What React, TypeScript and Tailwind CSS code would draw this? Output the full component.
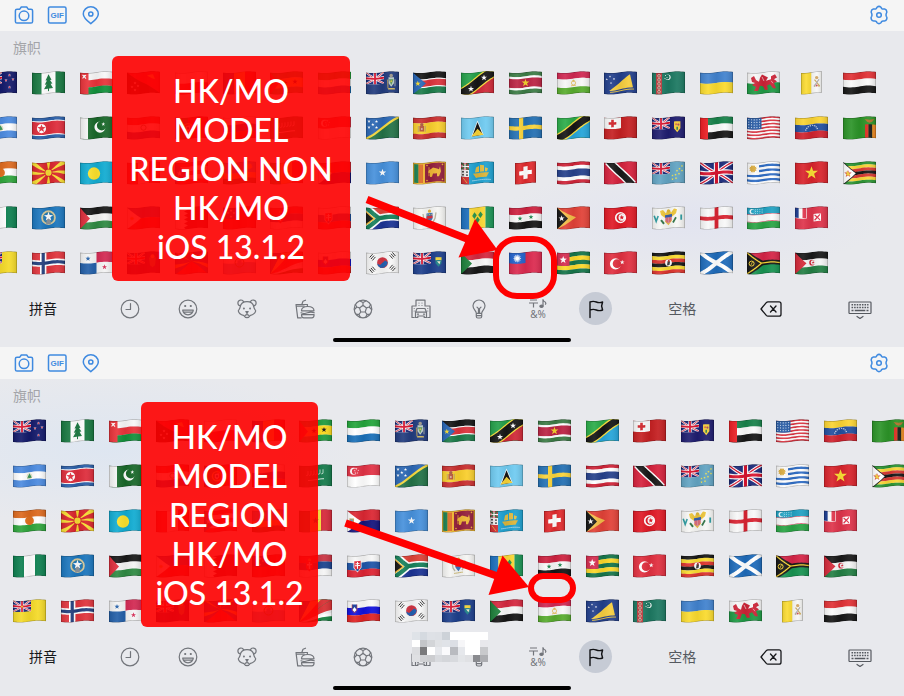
import type { ReactNode } from "react";

/* ---------- flag drawing helpers: every shape is bent along one wave ---------- */

type Shape = { d: string; f?: string; s?: string; w?: number };
type Pt = [number, number];

const W = 33;
const H = 21.5;
const wave = (x: number) => 1.5 + 0.75 * Math.sin((2 * Math.PI * x) / W) - (0.7 * x) / W;

const trace = (pts: Pt[], closed: boolean) => {
  const out: string[] = [];
  const n = closed ? pts.length : pts.length - 1;
  for (let i = 0; i < n; i++) {
    const [x0, y0] = pts[i];
    const [x1, y1] = pts[(i + 1) % pts.length];
    const steps = Math.max(1, Math.ceil(Math.abs(x1 - x0) / 2));
    for (let k = i === 0 ? 0 : 1; k <= steps; k++) {
      const x = x0 + ((x1 - x0) * k) / steps;
      const y = y0 + ((y1 - y0) * k) / steps;
      out.push(`${x.toFixed(2)} ${(y + wave(x)).toFixed(2)}`);
    }
  }
  return "M" + out.join("L") + (closed ? "Z" : "");
};
const toPts = (text: string): Pt[] => text.split(" ").map((p) => p.split(",").map(Number) as Pt);

const P = (pts: string, f: string): Shape => ({ d: trace(toPts(pts), true), f });
const L = (pts: string, s: string, w: number): Shape => ({ d: trace(toPts(pts), false), s, w });
const R = (x: number, y: number, w: number, h: number, f: string): Shape => ({
  d: trace([[x, y], [x + w, y], [x + w, y + h], [x, y + h]], true),
  f,
});
const ring = (cx: number, cy: number, r: number) => {
  const y = cy + wave(cx);
  return `M${cx - r} ${y}a${r} ${r} 0 1 0 ${2 * r} 0a${r} ${r} 0 1 0 ${-2 * r} 0Z`;
};
const C = (cx: number, cy: number, r: number, f: string): Shape => ({ d: ring(cx, cy, r), f });
const O = (cx: number, cy: number, r: number, s: string, w: number): Shape => ({ d: ring(cx, cy, r), s, w });
const S = (cx: number, cy: number, r: number, f: string, n = 5, inner = 0.4): Shape => {
  const oy = wave(cx) + cy;
  const pts: string[] = [];
  for (let i = 0; i < n * 2; i++) {
    const a = -Math.PI / 2 + (i * Math.PI) / n;
    const q = i % 2 ? r * inner : r;
    pts.push(`${(cx + q * Math.cos(a)).toFixed(2)} ${(oy + q * Math.sin(a)).toFixed(2)}`);
  }
  return { d: "M" + pts.join("L") + "Z", f };
};
const bands = (...list: [string, number][]): Shape[] => {
  const total = list.reduce((a, b) => a + b[1], 0);
  let y = 0;
  return list.map(([c, n]) => {
    const h = (n / total) * H;
    const s = R(0, y, W, h + 0.1, c);
    y += h;
    return s;
  });
};
const hor = (...cs: string[]) => bands(...cs.map((c) => [c, 1] as [string, number]));
const ver = (...cs: string[]) => cs.map((c, i) => R((i * W) / cs.length, 0, W / cs.length + 0.1, H, c));
const bg = (c: string) => R(0, 0, W, H, c);
const union = (w: number, h: number, k = 1): Shape[] => [
  R(0, 0, w, h, "#1b2a7a"),
  L(`0,0 ${w},${h}`, "#fff", 2.4 * k),
  L(`0,${h} ${w},0`, "#fff", 2.4 * k),
  L(`0,0 ${w},${h}`, "#d8142f", 0.9 * k),
  L(`0,${h} ${w},0`, "#d8142f", 0.9 * k),
  R(w / 2 - 1.9 * k, 0, 3.8 * k, h, "#fff"),
  R(0, h / 2 - 1.9 * k, w, 3.8 * k, "#fff"),
  R(w / 2 - 1.1 * k, 0, 2.2 * k, h, "#d8142f"),
  R(0, h / 2 - 1.1 * k, w, 2.2 * k, "#d8142f"),
];
const ensign = (field: string): Shape[] => [...union(18, 11.5, 0.85), R(18, 0, 15, H, field), R(0, 11.5, 18.1, 10, field)];
const crescent = (cx: number, cy: number, r: number, f: string, back: string, shift = 0.3): Shape[] => [
  C(cx, cy, r, f),
  C(cx + r * shift, cy, r * 0.8, back),
];

const flags: Record<string, Shape[]> = {
  NZ: [...ensign("#141a6b"), ...[[25.5, 4], [22, 9], [29, 8], [25.5, 16]].flatMap(([x, y]) => [S(x, y, 1.7, "#fff"), S(x, y, 1.1, "#d8142f")])],
  NI: [...hor("#4c8be0", "#fff", "#4c8be0"), P("16.5,8 14,13 19,13", "#3f9a5f"), O(16.5, 11, 2.4, "#c9c483", 0.5)],
  NE: [...hor("#dd6a1f", "#fff", "#2fa53c"), C(16.5, 10.5, 4.4, "#e0701f")],
  NG: ver("#0e8050", "#fff", "#0e8050"),
  NU: [bg("#f5db2a"), ...union(18, 11, 0.8), S(9, 5.5, 1.6, "#f5db2a")],
  NF: [bg("#fff"), R(0, 0, 9.5, H, "#177740"), R(23.5, 0, 10, H, "#177740"), P("16.5,2 13.5,8 15,8 12.8,12 14.6,12 12,16.5 21,16.5 18.6,12 20.4,12 18,8 19.5,8", "#217c46"), R(16, 16, 1, 3, "#217c46")],
  KP: [...bands(["#2b5fa8", 3], ["#fff", 0.8], ["#de2d3c", 11], ["#fff", 0.8], ["#2b5fa8", 3]), C(9.5, 10.5, 4.6, "#fff"), S(9.5, 10.5, 4.4, "#de2d3c")],
  MK: [bg("#d9252c"), P("0,0 4,0 16.5,10.5 0,2.5", "#f7dc32"), P("33,0 29,0 16.5,10.5 33,2.5", "#f7dc32"), P("0,21.5 4,21.5 16.5,10.5 0,19", "#f7dc32"), P("33,21.5 29,21.5 16.5,10.5 33,19", "#f7dc32"), P("14.8,0 18.2,0 16.5,10", "#f7dc32"), P("14.8,21.5 18.2,21.5 16.5,11", "#f7dc32"), P("0,8.7 16,10.5 0,12.3", "#f7dc32"), P("33,8.7 17,10.5 33,12.3", "#f7dc32"), C(16.5, 10.5, 4, "#d9252c"), C(16.5, 10.5, 3.1, "#f7dc32")],
  MP: [bg("#1b76bd"), O(16.5, 10.5, 6.4, "#d5c79b", 1.8), O(16.5, 10.5, 5.2, "#4e8b85", 0.6), P("14.8,11 18.2,11 19,17 14,17", "#8d949c"), S(16.5, 9.5, 4.8, "#fff")],
  NO: [bg("#e0353d"), R(8, 0, 6.4, H, "#fff"), R(0, 7.3, W, 6.4, "#fff"), R(9.6, 0, 3.2, H, "#233f7d"), R(0, 8.9, W, 3.2, "#233f7d")],
  OM: [...hor("#f7f7f7", "#e9333a", "#12913c"), R(0, 0, 8.5, H, "#e9333a"), L("2.5,2 6,5.5", "#fff", 1.1), L("6,2 2.5,5.5", "#fff", 1.1), C(4.2, 3, 0.9, "#fff")],
  PK: [bg("#19682a"), R(0, 0, 8, H, "#f5f5f5"), C(20, 10.5, 5.6, "#fff"), C(21.8, 9.2, 4.9, "#19682a"), S(23.3, 7.8, 2, "#fff")],
  PW: [bg("#12acd2"), C(14, 11, 6.2, "#fbe12c")],
  PS: [...hor("#191919", "#f4f4f4", "#2f8a43"), P("0,0 10,10.5 0,21.5", "#df2e3c")],
  PA: [bg("#f4f4f4"), R(16.5, 0, 16.5, 10.5, "#d32a53"), R(0, 10.5, 16.5, 11, "#235fa8"), S(8, 5.5, 2.7, "#235fa8"), S(24.5, 15.8, 2.7, "#d32a53")],
  PG: [bg("#111"), P("0,0 33,0 33,21.5", "#d01f36"), ...[[8, 10], [8, 17], [5, 14], [11, 13]].map(([x, y]) => S(x, y, 1.5, "#fff")), P("20,4 26,3 28,8 25,7", "#f4cf2c")],
  PY: [...hor("#d3222f", "#fff", "#0c3ba0"), O(16.5, 10.5, 2.6, "#387c4c", 0.8)],
  PE: ver("#d3222f", "#fff", "#d3222f"),
  PH: [...hor("#1144a5", "#ce1d2e"), P("0,0 14,10.5 0,21.5", "#fff"), S(5, 10.5, 2.6, "#f3c62a", 8)],
  PN: [...ensign("#141a6b"), P("22,6 29,6 28,14 25.5,16 23,14", "#48885c"), C(25.5, 5, 2, "#e2c84a")],
  PL: hor("#fff", "#d8203c"),
  PT: [bg("#d8202a"), R(0, 0, 13, H, "#176b35"), O(13, 10.5, 4.6, "#f1dc32", 1.4), P("10.8,8 15.2,8 15.2,12 13,14 10.8,12", "#fff"), C(13, 10.5, 1.2, "#1b45a0")],
  PR: [...hor("#de2d3c", "#fff", "#de2d3c", "#fff", "#de2d3c"), P("0,0 13,10.5 0,21.5", "#175fb5"), S(4.6, 10.5, 3, "#fff")],
  QA: [bg("#7e1c3d"), P("0,0 9,0 13,1.5 9,3.5 13,5.5 9,7.5 13,9.5 9,11.5 13,13.5 9,15.5 13,17.5 9,19.5 11,21.5 0,21.5", "#fff")],
  RE: [bg("#1b3f96"), P("16.5,9 1,21.5 32,21.5", "#dc2430"), P("16.5,9 0,0 4,0", "#f4cb27"), P("16.5,9 15,0 18,0", "#f4cb27"), P("16.5,9 33,0 29,0", "#f4cb27"), P("16.5,9 0,12 0,16", "#f4cb27"), P("16.5,9 33,12 33,16", "#f4cb27")],
  RO: ver("#12388f", "#f7d22b", "#ce1c2b"),
  RU: hor("#fff", "#1540a5", "#d6222c"),
  RW: [...bands(["#2aa4dd", 2], ["#f8dd34", 1], ["#27703b", 1]), S(26.5, 5, 3.4, "#f8dd34", 12, 0.6)],
  WS: [bg("#d0212e"), R(0, 0, 16, 11, "#12318e"), ...[[8, 2.5], [5, 5], [11, 5], [8, 8.5]].map(([x, y]) => S(x, y, 1.5, "#fff"))],
  SM: [...hor("#fff", "#62b4e6"), O(16.5, 10.5, 4.4, "#4b8a4b", 1), P("14.5,8 18.5,8 18.5,12 16.5,14 14.5,12", "#66a8d8"), C(16.5, 6, 1.5, "#e4b92b")],
  ST: [...bands(["#1f9a3f", 2], ["#fbd81c", 3], ["#1f9a3f", 2]), P("0,0 9,10.5 0,21.5", "#d6222c"), S(15, 10.5, 2.8, "#111"), S(25, 10.5, 2.8, "#111")],
  SA: [bg("#157a4b"), ...[9, 12, 15, 18, 21, 24].map((x) => L(`${x},5 ${x},9 ${x - 1.8},9.6`, "#d6eadf", 0.8)), L("9,14.5 25,14.5", "#d6eadf", 1)],
  SN: [...ver("#168a45", "#f6de3d", "#d6293a"), S(16.5, 10.5, 3.4, "#168a45")],
  RS: [...hor("#c93443", "#1b438e", "#f5f5f5"), P("7,5 14,5 14,12 10.5,15.5 7,12", "#d1333d"), R(9.8, 6, 1.4, 7, "#fff"), R(8, 8, 5, 1.4, "#fff"), C(10.5, 3.8, 1.5, "#e7c04a")],
  SC: [bg("#16803f"), P("0,21.5 33,12 33,16.5", "#fff"), P("0,21.5 33,6 33,13", "#f2f2f2"), P("0,21.5 33,0 33,10", "#d92f33"), P("0,21.5 20,0 33,0", "#d92f33"), P("0,21.5 11,0 22,0", "#fada45"), P("0,21.5 0,0 11,0", "#134a94")],
  SL: hor("#24a53b", "#fff", "#1a70b8"),
  SG: [...hor("#e23346", "#fff"), ...crescent(6.5, 5.3, 3.5, "#fff", "#e23346", 0.35), ...[[9.5, 2.8], [7.8, 4.6], [11.3, 4.6], [8.4, 7], [10.6, 7]].map(([x, y]) => S(x, y, 0.9, "#fff"))],
  SX: [...hor("#dc2733", "#14147d"), P("0,0 14,10.5 0,21.5", "#fff"), P("2.5,7.5 7,7.5 7,11.5 4.7,14 2.5,11.5", "#c3a456"), R(3.6, 8.6, 2.2, 2.5, "#5a97cf")],
  SK: [...hor("#f6f6f6", "#1f55a8", "#de2433"), P("6.5,4.5 14.5,4.5 14.5,12 10.5,16.5 6.5,12", "#fff"), P("7.3,5.2 13.7,5.2 13.7,12 10.5,15.4 7.3,12", "#e12433"), R(10, 6, 1, 7.5, "#fff"), R(8.6, 7.2, 3.8, 1, "#fff"), R(8, 9.2, 5, 1, "#fff"), C(10.5, 14, 1.2, "#1f55a8")],
  SI: [...hor("#fafafa", "#1212dc", "#e02323"), P("5,3.5 10,3.5 10,9 7.5,12 5,9", "#123b9b"), P("5.3,9 7.5,6 9.7,9 7.5,11", "#fff"), L("5,3.5 5,9 7.5,12 10,9 10,3.5", "#d8353b", 0.6)],
  GS: [...ensign("#223c7e"), P("22.5,6 28,6 28,12 25.2,15.5 22.5,12", "#b9c9c4"), P("23,8 27.5,8 25.2,14", "#4d8f55"), C(25.2, 4.4, 1.8, "#9a9488"), L("21.5,8 22,17", "#9c8a63", 1.2), L("29,8 29,15", "#87909b", 1.2), L("22,17.5 29,17.5", "#cfb65d", 1.4), S(25.2, 10, 1.5, "#e9c83b")],
  SB: [bg("#2b67b4"), P("0,21.5 33,0 33,21.5", "#237247"), L("-1,22 34,-0.5", "#f5d83c", 2.2), ...[[3, 3.5], [10.5, 3.5], [6.8, 6.5], [3, 9.5], [10.5, 9.5]].map(([x, y]) => S(x, y, 1.7, "#fff"))],
  SO: [bg("#4791dc"), S(16.5, 10.5, 3.9, "#fff")],
  ZA: [...hor("#dd4136", "#1b3394"), L("-1,-1.5 13,10.5 34,10.5", "#fff", 7.6), L("-1,22.5 13,10.5", "#fff", 7.6), L("-1,-1 13,10.5 34,10.5", "#16805a", 4.4), L("-1,22 13,10.5", "#16805a", 4.4), P("0,3.2 9.4,10.6 0,18", "#f2bd3a"), P("0,5 7.2,10.6 0,16.2", "#181818")],
  KR: [
    bg("#f7f7f7"),
    C(16.5, 10.5, 5.4, "#d13442"),
    P("11.2,10.5 14,12.5 16.5,10.6 19,8.8 21.8,10.8 20.8,13.8 18.2,15.5 14.6,15.5 12,13.2", "#2260b0"),
    ...[[5, 6, 8, 2.5], [25, 2.5, 28, 6], [5, 15, 8, 18.5], [25, 18.5, 28, 15]].flatMap(([ax, ay, bx, by]) =>
      [-1.4, 0, 1.4].map((k) => {
        const s = by > ay ? 1 : -1;
        return L(`${ax + k},${ay - k * s} ${bx + k},${by - k * s}`, "#1b1b1b", 0.95);
      }),
    ),
  ],
  SS: [...bands(["#161616", 6], ["#fff", 1], ["#dc343d", 6], ["#fff", 1], ["#1b7c4a", 6]), P("0,0 13,10.5 0,21.5", "#2765b5"), S(4.8, 10.7, 2.9, "#f8dc2f")],
  ES: [...bands(["#c93030", 1], ["#f9cf2d", 2], ["#c93030", 1]), R(6.5, 8, 4.6, 5.5, "#b5533a"), R(4.8, 8, 0.9, 6, "#b9a06b"), R(11.8, 8, 0.9, 6, "#b9a06b"), C(8.8, 6.6, 1.7, "#a8533e"), C(8.8, 11, 1, "#d9b0a3")],
  LK: [bg("#f1b932"), R(1.2, 1.4, 4.4, 18.6, "#1a8052"), R(5.6, 1.4, 4.4, 18.6, "#dc6a25"), R(12, 1.4, 19.6, 18.6, "#931f3c"), P("16,8 20,6 26,8 27,5 28,10 26,15 24,15 24,12 20,12 19,15 17,15 17,11 15,10", "#eeb634"), L("16,5 16,14", "#eeb634", 0.8), ...[[14, 3], [29.5, 3], [14, 18], [29.5, 18]].map(([x, y]) => C(x, y, 0.8, "#eeb634"))],
  BL: [bg("#f5f5f3"), P("13.5,6 19.5,6 19.5,12 16.5,16 13.5,12", "#3d74bd"), R(13.5, 8.8, 6, 2.6, "#d8313a"), ...[14.8, 16.5, 18.2].map((x) => C(x, 7.4, 0.6, "#ecc93f")), C(16.5, 4, 1.6, "#dfb341"), L("10,6 11,12 13,15.5", "#b9b39d", 1.3), L("23,6 22,12 20,15.5", "#b9b39d", 1.3), L("12,17.6 21,17.6", "#c9b36a", 0.9)],
  SH: [...ensign("#1d3f8c"), P("22.5,6 28.5,6 28.5,12 25.5,15.5 22.5,12", "#1d7f86"), R(22.5, 6, 6, 2.8, "#f3cf39"), P("24,10 27.5,10 26.5,13", "#e9e6c8")],
  KN: [bg("#24a04a"), P("33,0 33,21.5 0,21.5", "#d02938"), L("-1,22.3 34,-1", "#f8df3b", 11), L("-1,22.3 34,-1", "#161616", 8.6), S(10, 16, 3.2, "#fff"), S(23, 6.4, 3.2, "#fff")],
  LC: [bg("#70cbf1"), P("16.5,3.4 22.6,18.5 10.4,18.5", "#fff"), P("16.5,5.2 21.8,18.5 11.2,18.5", "#171717"), P("16.5,11.5 22.6,18.5 10.4,18.5", "#f7d337")],
  PM: [bg("#1fa1d0"), R(0, 0, 8, 7, "#bd3540"), L("0,0 8,7", "#2c7a45", 1.3), L("8,0 0,7", "#2c7a45", 1.3), L("4,0 4,7", "#fff", 1.1), L("0,3.5 8,3.5", "#fff", 1.1), R(0, 7, 8, 7, "#f2eeee"), ...[[2, 9], [6, 9], [2, 12], [6, 12]].map(([x, y]) => C(x, y, 0.9, "#222")), R(0, 14, 8, 7.5, "#d22d33"), L("2,15 6,20", "#e8c344", 0.8), P("12,11 28,11 25.5,15.5 15,15.5", "#dcb53a"), P("15,5 18,4 18,10 14,10", "#e3bd42"), P("19,3 23,4 23,10 19,10", "#e3bd42"), P("24,6 27,7 26,10 24,10", "#e3bd42"), L("11,18 30,18", "#9bd3ea", 0.9)],
  VC: [R(0, 0, 8.5, H, "#1c6fbd"), R(8.4, 0, 16.2, H, "#fbd937"), R(24.5, 0, 8.6, H, "#1c9556"), ...[[13.5, 8], [19.5, 8], [16.5, 13]].map(([x, y]) => P(`${x},${y - 3.3} ${x + 2.3},${y} ${x},${y + 3.3} ${x - 2.3},${y}`, "#28944e"))],
  SD: [...hor("#d5283f", "#f7f7f7", "#161616"), P("0,0 11,10.5 0,21.5", "#1d7f3a")],
  SR: [...bands(["#3c7c46", 3.2], ["#fff", 1.6], ["#bb2343", 7], ["#fff", 1.6], ["#3c7c46", 3.2]), S(16.5, 10.7, 4.1, "#f5d22e")],
  SE: [bg("#2470b3"), R(10, 0, 4.2, H, "#fad43b"), R(0, 8.4, W, 4.2, "#fad43b")],
  CH: [bg("#e02a2d"), R(14.4, 4.2, 4.2, 12.6, "#fff"), R(10.2, 8.4, 12.6, 4.2, "#fff")],
  SY: [...hor("#ce2240", "#f8f8f8", "#161616"), S(11, 10.7, 2.5, "#198249"), S(22, 10.7, 2.5, "#198249")],
  TW: [bg("#dc2b50"), R(0, 0, 16.5, 10.8, "#2564cd"), S(8.2, 5.4, 4.1, "#fff", 12, 0.65), O(8.2, 5.4, 2.4, "#6a97de", 0.5)],
  TJ: [...bands(["#d02852", 2], ["#f7f7f7", 2.6], ["#58ac2e", 2]), O(16.5, 10.8, 2.1, "#e6bf55", 0.8), S(16.5, 8.6, 1.6, "#e6bf55"), R(14, 13, 5, 0.7, "#e6bf55")],
  TZ: [bg("#2bac49"), P("33,0 33,21.5 0,21.5", "#25a5d9"), L("-1,22.3 34,-1", "#f8dc3c", 9.4), L("-1,22.3 34,-1", "#151515", 6.8)],
  TH: bands(["#cf2438", 1], ["#fff", 1], ["#26418b", 2], ["#fff", 1], ["#cf2438", 1]),
  TL: [bg("#e24238"), P("0,0 19,10.5 0,21.5", "#f3bd48"), P("0,0 11,10.5 0,21.5", "#171717"), S(4.6, 10.5, 3.2, "#fff")],
  TG: [...hor("#15754a", "#fcd829", "#15754a", "#fcd829", "#15754a"), R(0, 0, 12.5, 12.9, "#d62d50"), S(6.2, 6.8, 3.9, "#fff")],
  TK: [bg("#223f8c"), P("5,18 26,3 29,16", "#f6ce3f"), L("6,19.3 30,17.6", "#f6ce3f", 0.9), ...[[6, 3.5], [2.8, 6.5], [10, 6], [7, 10]].map(([x, y]) => S(x, y, 1.2, "#fff"))],
  TO: [bg("#c52022"), R(0, 0, 17, 11, "#f9f9f9"), R(7.2, 1.7, 2.6, 7.6, "#ce2127"), R(4.7, 4.2, 7.6, 2.6, "#ce2127")],
  TT: [bg("#d5213c"), L("4.5,-2 28.5,23.5", "#fff", 9), L("4.5,-2 28.5,23.5", "#171717", 6.2)],
  TN: [bg("#e01a26"), C(16.5, 10.5, 5.6, "#fff"), C(16.8, 10.5, 4.2, "#e01a26"), C(17.9, 10.5, 3.4, "#fff"), S(17.8, 10.5, 2.6, "#e01a26")],
  TR: [bg("#e13040"), C(11.5, 11, 5.6, "#fff"), C(13.1, 11, 4.4, "#e13040"), S(18.2, 10.4, 2.5, "#fff")],
  TM: [bg("#1d7962"), R(4, 0, 6, H, "#b83a3c"), ...[2.8, 6.8, 10.8, 14.8, 18.7].flatMap((y) => [O(7, y, 1.3, "#efd9c6", 0.7), C(7, y, 0.6, "#2b7252")]), C(15.8, 5, 2.8, "#fff"), C(15, 4.6, 2.5, "#1d7962"), ...[[13.5, 3], [15, 5], [13, 5.8]].map(([x, y]) => C(x, y, 0.5, "#fff"))],
  TC: [...ensign("#1f1d70"), P("22,5 28.4,5 28.4,12 25.2,16 22,12", "#f3cc3b"), C(24.2, 8, 1.1, "#d96d3f"), C(26.4, 8.3, 1.1, "#a8475a"), R(24.4, 10.5, 1.6, 3, "#33804c")],
  TV: [...ensign("#62a4c3"), ...[[30, 4.5], [27.5, 7.5], [30, 9], [25, 9.5], [27, 12.5], [23.5, 13.5], [20.5, 14], [24, 17], [20.5, 17.6]].map(([x, y]) => S(x, y, 1.3, "#f6e34a"))],
  VI: [bg("#f7f7f5"), P("8,3 11,2 14,6 15,3 18,3 19,6 22,2 25,3 24,7 20,10 20,14 16.5,18 13,14 13,10 9,7", "#edc53a"), L("9,12 12,16", "#2f7245", 2), L("24,11 21,16", "#2f7245", 1.8), P("13,8 20,8 20,13 16.5,16.5 13,13", "#e08f9b"), L("15,10 15,15", "#d23a4d", 0.8), L("18,10 18,15", "#d23a4d", 0.8), R(13, 7.5, 7, 2.6, "#355fae"), C(16.5, 3.8, 1.6, "#e0b838"), L("2.2,8 4.2,13.4 6.2,8", "#2a9ba0", 1.6), L("29.2,8 29.2,13.4", "#2a9ba0", 1.8)],
  UG: [...hor("#171717", "#fbdc31", "#dc342d", "#171717", "#fbdc31", "#dc342d"), C(16.5, 10.7, 3.4, "#fff"), P("15,13 15.6,9 17,8 18,10 17.5,13", "#444"), C(16.8, 8.8, 0.9, "#c33a31")],
  UA: hor("#4283cf", "#fadb2f"),
  AE: [...hor("#18824a", "#fafafa", "#181818"), R(0, 0, 8, H, "#ec1f24")],
  GB: union(33, 21.5, 1.4),
  EN: [bg("#f8f8f8"), R(14.6, 0, 3.8, H, "#d92432"), R(0, 8.8, W, 3.8, "#d92432")],
  SCT: [bg("#1e6bba"), L("-1,-1 34,22.5", "#fff", 4), L("-1,22.5 34,-1", "#fff", 4)],
  WLS: [...hor("#f8f8f8", "#1f9a45"), P("4,5 7,3 9,7 12,9 13,5 15,2 21,6 19,9 24,8 24,5 28,3 30,6 27,8 30,10 27,12 29,17 26,17 23,13 20,14 21,18 18,18 16,14 13,13 11,18 7,18 9,14 5,12 8,10 5,9", "#cc2336"), L("15,4.5 17,9", "#f3dfe0", 0.7), L("24,9.5 26,12", "#f3dfe0", 0.6)],
  US: [...hor(...Array.from({ length: 13 }, (_, i) => (i % 2 ? "#fff" : "#dc3542"))), R(0, 0, 14.5, 11.6, "#2a5da6"), ...[1.8, 4.4, 7, 9.6].flatMap((y) => [1.8, 4.5, 7.2, 9.9, 12.6].map((x) => C(x, y, 0.6, "#d4e2f4")))],
  UY: [...hor("#fff", "#2f6dc5", "#fff", "#2f6dc5", "#fff", "#2f6dc5", "#fff", "#2f6dc5", "#fff"), R(0, 0, 12, 11.9, "#fafafa"), S(6, 5.8, 4.2, "#d9aa3c", 12, 0.65)],
  UZ: [...bands(["#22a2c3", 6], ["#d4314b", 0.5], ["#fafafa", 6], ["#d4314b", 0.5], ["#2aa545", 6]), ...crescent(5, 3.5, 2.5, "#fff", "#22a2c3", 0.4), ...[8.5, 10.7, 12.9, 15.1].flatMap((x) => [1.8, 3.6, 5.4].map((y) => C(x, y, 0.45, "#fff")))],
  VU: [...hor("#d52547", "#179351"), P("0,-2 16,8.4 33,8.4 33,13 16,13 0,23.5", "#171717"), L("0,0.2 14.5,10.7 33,10.7", "#f6d333", 1.3), L("0,21.3 14.5,10.7", "#f6d333", 1.3), O(4.6, 10.6, 2.5, "#f6d333", 1), L("4,12 5.4,9", "#f6d333", 0.8)],
  VA: [R(0, 0, 16.5, H, "#fbdc34"), R(16.5, 0, 16.5, H, "#f7f7f5"), L("19.5,8 24,14", "#c9a75c", 1.2), L("24,8 19.5,14", "#a9a9ae", 1.2), C(21.7, 6.2, 1.7, "#d1a464"), C(21.7, 14, 1, "#c54850"), C(19.6, 14.4, 1, "#b7b19e"), C(24, 14.4, 1, "#d3ac56")],
  VE: [...hor("#fbd433", "#224f9f", "#d0232f"), ...[[10.8, 12.2], [11.8, 10.5], [13.2, 9.2], [15.3, 8.5], [17.7, 8.5], [19.8, 9.2], [21.2, 10.5], [22.2, 12.2]].map(([x, y]) => S(x, y, 1, "#fff"))],
  VN: [bg("#d9242c"), S(16.5, 10.8, 6.8, "#fbe034")],
  WF: [bg("#df344b"), R(0, 0, 11.8, 10.6, "#fff"), R(0, 0, 3.8, 10, "#1f3f94"), R(3.8, 0, 3.7, 10, "#fff"), R(7.5, 0, 3.7, 10, "#df344b"), R(18.6, 7.2, 7.4, 7.4, "#fff"), L("19.6,8.2 25,13.6", "#df344b", 1.2), L("25,8.2 19.6,13.6", "#df344b", 1.2)],
  EH: [...hor("#191919", "#f5f5f5", "#237f44"), P("0,0 11.5,10.5 0,21.5", "#d42939"), C(17, 10.6, 2.8, "#d42939"), C(18, 10.6, 2.3, "#f5f5f5"), S(18.2, 10.6, 1.6, "#d42939")],
  YE: hor("#e13236", "#fafafa", "#171717"),
  ZM: [bg("#2c9428"), R(22, 8, 3.7, 13.5, "#dc2f22"), R(25.6, 8, 3.7, 13.5, "#171717"), R(29.2, 8, 4, 13.5, "#f08a24"), P("21.5,2.5 26.5,3.6 31.5,2.5 29,5.6 26.5,6.4 24,5.6", "#b0702a")],
  ZW: [...hor("#2b9433", "#f9d638", "#d93a33", "#171717", "#d93a33", "#f9d638", "#2b9433"), P("0,-1 14,10.6 0,22.5", "#171717"), P("0,0 12.8,10.6 0,21.5", "#fff"), S(5, 10.8, 3.9, "#d93a33"), P("3.6,8 6,9.5 7.4,12.4 3.4,12.4", "#f4d23b")],
};

const outline = trace([[0, 0], [W, 0], [W, H], [0, H]], true);
const narrowOutline = trace([[6, 0], [27, 0], [27, H], [6, H]], true);

function Flag({ code }: { code: string }) {
  const narrow = code === "CH" || code === "VA";
  const edge = narrow ? narrowOutline : outline;
  return (
    <svg viewBox="0 0 33 24" className="h-6 w-[33px]" aria-hidden="true">
      <g clipPath={narrow ? "url(#cloth-narrow)" : "url(#cloth)"}>
        {flags[code].map((s, i) => (
          <path key={i} d={s.d} fill={s.f ?? "none"} stroke={s.s} strokeWidth={s.w} />
        ))}
        <path d={edge} fill="url(#fold)" />
        <path d={edge} fill="none" stroke="#000" strokeOpacity="0.26" strokeWidth="1.3" />
      </g>
    </svg>
  );
}

const regions =
  "NZ NI NE NG NU NF KP MK MP NO OM PK PW PS PA PG PY PE PH PN PL PT PR QA RE RO RU RW WS SM ST SA SN RS SC SL SG SX SK SI GS SB SO ZA KR SS ES LK BL SH KN LC PM VC SD SR SE CH SY TW TJ TZ TH TL TG TK TO TT TN TR TM TC TV VI UG UA AE GB EN SCT WLS US UY UZ VU VA VE VN WF EH YE ZM ZW".split(" ");

/* ---------- toolbar and key icons ---------- */

function Icon({ children, size = "size-5", box = "0 0 20 20" }: { children: ReactNode; size?: string; box?: string }) {
  return (
    <svg viewBox={box} className={size} fill="none" stroke="currentColor" strokeWidth="1.2" strokeLinecap="round" strokeLinejoin="round" aria-hidden="true">
      {children}
    </svg>
  );
}

function Toolbar() {
  return (
    <header className="flex h-[31px] items-center justify-between bg-[#f5f5f5] pr-[15px] pb-px pl-[14px] text-[#3f8ae0]">
      <div className="flex gap-[13px]">
        <button aria-label="Camera">
          <Icon>
            <g strokeWidth="1.5">
              <path d="M3 4.2h2.8L7.3 2h5.4l1.500 2.200H17a1.600 1.600 0 0 1 1.600 1.600v10.600A1.600 1.600 0 0 1 17 18H3a1.600 1.600 0 0 1-1.600-1.600V5.800A1.600 1.600 0 0 1 3 4.200Z" />
              <circle cx="10" cy="10.8" r="4.8" />
            </g>
          </Icon>
        </button>
        <button aria-label="GIF">
          <Icon>
            <rect x="1.500" y="2" width="17.5" height="16" rx="1.5" strokeWidth="1.5" />
            <text x="10.2" y="13" textAnchor="middle" fontSize="8" fontWeight="700" fill="currentColor" stroke="none" fontFamily="Liberation Sans, Arial, sans-serif">GIF</text>
          </Icon>
        </button>
        <button aria-label="Location">
          <Icon>
            <g strokeWidth="1.5">
              <path d="M10.800 18.700C6.500 15.400 3.300 12.600 3.300 9a7.500 7.300 0 0 1 15 0c0 3.600-3.200 6.400-7.500 9.700Z" />
              <circle cx="10.8" cy="9" r="2.1" />
            </g>
          </Icon>
        </button>
      </div>
      <button aria-label="Settings">
        <Icon>
          <g strokeWidth="1.5">
            <path d="M8 2.300Q10 .5 12 2.300L12.700 3.500Q13.300 4.200 14.300 4.100L15.700 4.100Q18 4.700 17.800 7.300L17.300 8.500Q16.800 10 17.300 11.200L17.900 12.500Q18.100 15.200 15.700 15.900L14.300 15.900Q13.300 15.800 12.700 16.500L12 17.700Q10 19.500 8 17.700L7.300 16.500Q6.700 15.800 5.700 15.900L4.300 15.900Q1.900 15.200 2.100 12.500L2.700 11.200Q3.200 10 2.700 8.500L2.200 7.300Q2 4.700 4.300 4.100L5.700 4.100Q6.700 4.200 7.300 3.500Z" />
            <circle cx="10" cy="10" r="2.3" />
          </g>
        </Icon>
      </button>
    </header>
  );
}

const categories: { name: string; art: ReactNode }[] = [
  { name: "Recent", art: <><circle cx="10" cy="10" r="8.8" /><path d="M10.500 4.500V10.500H6" /></> },
  {
    name: "Smileys",
    art: (
      <>
        <circle cx="10" cy="10" r="8.8" />
        <path d="M4.700 11.200h10.600c-.4 2.800-2.500 4.600-5.300 4.600s-4.900-1.800-5.300-4.600ZM5.500 13.200h9" />
        <circle cx="7.2" cy="7" r=".5" fill="currentColor" /><circle cx="12.8" cy="7" r=".5" fill="currentColor" />
      </>
    ),
  },
  {
    name: "Animals",
    art: (
      <>
        <path d="M10 2.600c4 0 6.300 2 6.800 5.200.3 1.700 1 2.400 1.900 4-.6 2.600-3 4-5.200 4.500-1 1.700-2 2.400-3.500 2.400s-2.500-.7-3.500-2.400C4.300 15.800 1.900 14.400 1.300 11.800c.9-1.600 1.600-2.300 1.900-4C3.700 4.600 6 2.600 10 2.600Z" />
        <path d="M3.400 7A3 3 0 1 1 6.700 3M16.600 7A3 3 0 1 0 13.300 3M10 14v1.500M8 16.400Q10 14.900 12 16.400" />
        <path d="M8.800 12.600h2.400L10 13.900Z" fill="currentColor" />
        <circle cx="6.900" cy="9.5" r=".4" fill="currentColor" /><circle cx="13.1" cy="9.5" r=".4" fill="currentColor" />
      </>
    ),
  },
  {
    name: "Food",
    art: (
      <>
        <path d="M6.300 18.800H2.700L1 5.500h11.500l-.2 2M6.800 5.500 8 2.300l2.500-1.100M1.200 7.200h8" />
        <path d="M6.500 11.800c0-2.500 2-4.300 6.200-4.300s6.300 1.800 6.300 4.300ZM6 13.800q3 1.500 6.500 0t6.700 0M6.500 15.700h12.600c0 2-.8 3.100-2.300 3.100H8.800c-1.500 0-2.300-1.100-2.300-3.100Z" />
      </>
    ),
  },
  {
    name: "Activity",
    art: (
      <>
        <circle cx="10" cy="10" r="8.8" />
        <path d="m10 6.300 3.500 2.600-1.300 4.100H7.800L6.500 8.900ZM10 6.300V3.500M13.500 8.900l2.700-.9M12.200 13l1.800 2.400M7.800 13 6 15.400M6.500 8.900 3.800 8M7 2l3 1.500L13 2M17.700 5.500 16.200 8l2.400 2.600M16.700 15.400H14l-1.300 2.900M7.300 18.300 6 15.400H3.300M1.400 10.600 3.800 8 2.300 5.500" />
      </>
    ),
  },
  {
    name: "Travel",
    art: (
      <>
        <path d="M3.300 18.500H1V7h4V1.200h9V7h5v11.500h-2.300M8 4h0M11 4h0M8 6.500h0M11 6.500h0M3.200 9.500h0M16.800 9.500h0M3.200 12h0M16.800 12h0" />
        <path d="M4.500 13.200 6 9.500h8l1.500 3.700v5.300h-2.300v-1.500H6.800v1.500H4.500ZM4.500 13.200h11M6.500 15.200h1M12.500 15.200h1" />
      </>
    ),
  },
  {
    name: "Objects",
    art: <path d="M7.300 14.300C7 11.500 4 10.500 4 6.800a6 5.800 0 0 1 12 0c0 3.700-3 4.700-3.300 7.500ZM7.300 14.300v3.200q0 1.500 1.500 1.500h2.400q1.500 0 1.500-1.500v-3.200M7.300 16.600h5.400M8 8.200l1.500 1.500v4.300M12 8.200l-1.500 1.500v4.300" />,
  },
  {
    name: "Symbols",
    art: (
      <>
        <path d="M3 2h7M2 5h9M6.500 5v4.500M16 8.300V1.500q.4 2 2.500 2.800.8.900-.2 2.400" strokeLinecap="butt" />
        <ellipse cx="14.5" cy="8.3" rx="1.600" ry="1.200" fill="currentColor" />
        <text x="11" y="20" textAnchor="middle" fontSize="10" fill="currentColor" stroke="none" fontFamily="Noto Sans, sans-serif">&amp;%</text>
      </>
    ),
  },
  {
    name: "Flags",
    art: <path d="M4 18.500V3q3.200-1.300 6.300 0t6.300 0l-1 4 1 4q-3.200 1.300-6.300 0T4 11" strokeWidth="1.4" />,
  },
];

function KeyRow() {
  return (
    <nav className="grid h-[45px] grid-cols-[101fr_524fr_279fr] items-center font-['Noto_Sans_CJK_SC',sans-serif] text-sm">
      <button className="pr-[15px] pb-0.5 text-[#16171a]">拼音</button>
      <div className="grid grid-cols-9 text-[#72757b]">
        {categories.map(({ name, art }) => (
          <button
            key={name}
            aria-label={name}
            className={name === "Flags" ? "mx-auto grid size-[33px] place-items-center rounded-full bg-[#c6cbd5] text-[#101114]" : "mx-auto grid size-[33px] place-items-center"}
          >
            {name === "Symbols" ? <Icon size="h-6 w-[22px]" box="0 -1 22 24">{art}</Icon> : <Icon>{art}</Icon>}
          </button>
        ))}
      </div>
      <div className="grid grid-cols-3 place-items-center pl-[13px] text-[#55595f]">
        <button className="pb-0.5">空格</button>
        <button aria-label="Delete" className="text-[#16171a]">
          <Icon size="h-5 w-[22px]" box="0 0 22 20">
            <path d="M8 2.800h11q2 0 2 2v10.400q0 2-2 2H8q-1 0-1.700-.8L1 10l5.300-6.400Q7 2.800 8 2.800ZM10.500 7l5.500 6M16 7l-5.500 6" strokeWidth="1.3" />
          </Icon>
        </button>
        <button aria-label="Hide keyboard">
          <Icon size="h-5 w-6" box="0 0 24 20">
            <rect x="1" y="3" width="22" height="11.5" rx=".8" />
            <path d="M3.500 5.800h17M3.500 8.600h17" strokeDasharray="1.6 1" strokeWidth="1.5" strokeLinecap="butt" />
            <path d="M3.500 11.500h2M6.700 11.500h10.600M18.500 11.500h2" strokeWidth="1.5" strokeLinecap="butt" />
            <path d="m9 17.500 3 2 3-2" />
          </Icon>
        </button>
      </div>
    </nav>
  );
}

/* ---------- keyboard pane ---------- */

function Pane({ codes, grid, tint, children }: { codes: string[]; grid: string; tint: string; children: ReactNode }) {
  return (
    <section className="relative overflow-hidden">
      <Toolbar />
      <div className={tint}>
        <h2 className="h-[29px] pt-1.5 pl-[13px] font-['Noto_Sans_CJK_SC',sans-serif] text-sm leading-5 text-[#a3a4a8]">旗帜</h2>
        <div className={grid}>
          {codes.map((code) => (
            <button key={code} aria-label={code} className="grid place-items-center">
              <Flag code={code} />
            </button>
          ))}
        </div>
        <KeyRow />
        <div className="mx-auto mt-[7px] h-1 w-[238px] rounded-full bg-black" />
        <div className="h-[5px]" />
      </div>
      {children}
    </section>
  );
}

const mosaic = [
  "#dfe3e8 #d5dae0 #dee1e6 #dde0e5 #cdd2d8 #ffffff #ffffff #ffffff #ffffff #ffffff",
  "#ffffff #c4c6c9 #d3d5d8 #e0e2e5 #e0e3e8 #dcdfe5 #f6f6f8 #ffffff #ffffff #e8e8ec",
  "#dcdde0 #7a7a7c #ffffff #e6e8ec #fafafc #b9bbc0 #e6e8ec #ffffff #ffffff #c8c9cc",
  "#dfe0e3 #cfd0d3 #cccdd0 #d8dade #d4d6da #d8dade #e3e5e8 #e0e1e4 #8a8b8f #adaeb2",
].flatMap((row) => row.split(" "));

function Note({ place, lines }: { place: string; lines: string[] }) {
  return (
    <div className={place}>
      {lines.map((line, i) => (
        <p key={i}>{line}</p>
      ))}
    </div>
  );
}

export default function App() {
  return (
    <main className="min-h-screen w-full bg-[#e8e9ed]">
      <svg className="absolute size-0" aria-hidden="true">
        <defs>
          <clipPath id="cloth"><path d={outline} /></clipPath>
          <clipPath id="cloth-narrow"><path d={narrowOutline} /></clipPath>
          <linearGradient id="fold">
            <stop offset="0" stopColor="#000" stopOpacity="0.1" />
            <stop offset="0.25" stopColor="#fff" stopOpacity="0.08" />
            <stop offset="0.5" stopColor="#000" stopOpacity="0.05" />
            <stop offset="0.75" stopColor="#fff" stopOpacity="0.06" />
            <stop offset="1" stopColor="#000" stopOpacity="0.14" />
          </linearGradient>
        </defs>
      </svg>

      <Pane
        codes={regions}
        grid="-ml-[23px] mr-[21px] grid h-[226px] grid-flow-col grid-rows-5 auto-cols-fr"
        tint="bg-[#e8e9ed] bg-[radial-gradient(ellipse_at_76%_60%,#e2e4f0,transparent_20%)]"
      >
        <Note
          place="absolute top-14 left-28 w-[238px] rounded-md bg-[#ff0000]/90 py-[15px] text-center font-[Lato,sans-serif] text-[32px] leading-[39px] font-medium text-white"
          lines={["HK/MO", "MODEL", "REGION NON", "HK/MO", "iOS 13.1.2"]}
        />
        <svg className="absolute top-[190px] left-[360px] h-[80px] w-[150px]" viewBox="360 190 150 80" aria-hidden="true">
          <path d="M367 199.500 470 240" stroke="#f00" strokeWidth="7.5" />
          <path d="m497.500 250-22.500-31-16.500 38.500Z" fill="#f00" />
        </svg>
        <div className="absolute top-[236px] left-[493px] h-[63px] w-16 rounded-3xl border-6 border-[#ff0000]" />
      </Pane>

      <div className="border-t border-[#f5f5f5]">
        <Pane
          codes={regions.filter((c) => c !== "TW")}
          grid="-mr-2 ml-1.5 grid h-[226px] grid-flow-col grid-rows-5 auto-cols-fr"
          tint="bg-[#e8e9ed] bg-[radial-gradient(ellipse_at_12%_22%,#dee6f1,transparent_22%)]"
        >
          <Note
            place="absolute top-[54px] left-[141px] w-[177px] rounded-md bg-[#ff0000]/90 py-[15px] text-center font-[Lato,sans-serif] text-[32px] leading-[39px] font-medium text-white"
            lines={["HK/MO", "MODEL", "REGION", "HK/MO", "iOS 13.1.2"]}
          />
          <svg className="absolute top-[162px] left-[340px] h-[100px] w-[200px]" viewBox="340 510 200 100" aria-hidden="true">
            <path d="M345.500 523 500 577" stroke="#f00" strokeWidth="7.5" />
            <path d="m529 587-26.500-31.500-14 39.500Z" fill="#f00" />
          </svg>
          <div className="absolute top-[225px] left-[528px] h-[30px] w-12 rounded-2xl border-6 border-[#ff0000]" />
          <div className="absolute top-[284px] left-[412px] grid h-[30px] w-[76px] grid-cols-10" aria-hidden="true">
            {mosaic.map((color, i) => (
              <span key={i} style={{ backgroundColor: color }} />
            ))}
          </div>
        </Pane>
      </div>
    </main>
  );
}
